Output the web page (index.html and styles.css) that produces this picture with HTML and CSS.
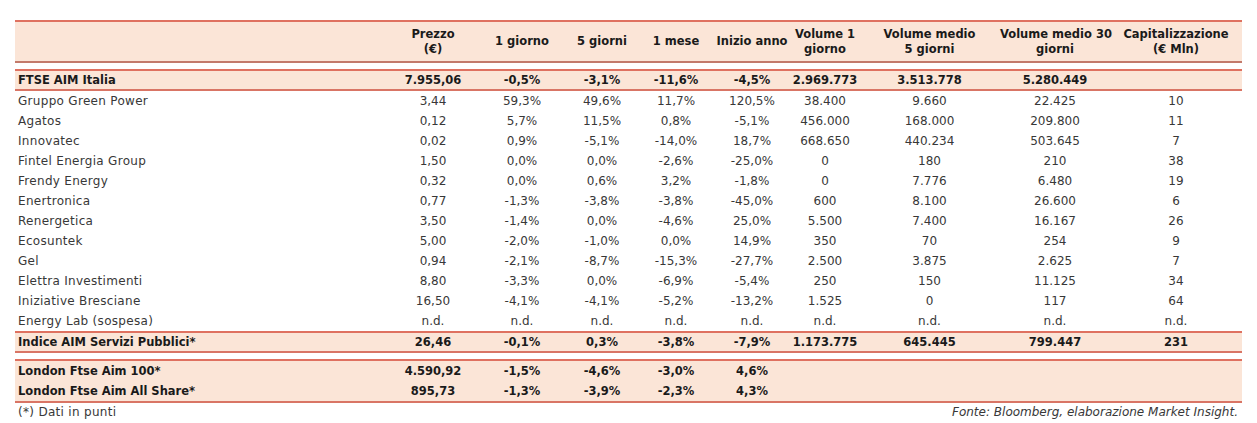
FILE: index.html
```html
<!DOCTYPE html>
<html lang="it">
<head>
<meta charset="utf-8">
<title>AIM Servizi Pubblici</title>
<link rel="stylesheet" href="styles.css">
</head>
<body>
<div class="sheet">
  <div class="band head">
    <div class="row hrow">
      <div class="c name"></div>
      <div class="c">Prezzo<br>(€)</div>
      <div class="c">1 giorno</div>
      <div class="c">5 giorni</div>
      <div class="c">1 mese</div>
      <div class="c">Inizio anno</div>
      <div class="c">Volume 1<br>giorno</div>
      <div class="c">Volume medio<br>5 giorni</div>
      <div class="c">Volume medio 30<br>giorni</div>
      <div class="c">Capitalizzazione<br>(€ Mln)</div>
    </div>
  </div>

  <div class="band idx">
    <div class="row">
      <div class="c name">FTSE AIM Italia</div>
      <div class="c">7.955,06</div><div class="c">-0,5%</div><div class="c">-3,1%</div><div class="c">-11,6%</div><div class="c">-4,5%</div><div class="c">2.969.773</div><div class="c">3.513.778</div><div class="c">5.280.449</div><div class="c"></div>
    </div>
  </div>

  <div class="body">
    <div class="row"><div class="c name">Gruppo Green Power</div><div class="c">3,44</div><div class="c">59,3%</div><div class="c">49,6%</div><div class="c">11,7%</div><div class="c">120,5%</div><div class="c">38.400</div><div class="c">9.660</div><div class="c">22.425</div><div class="c">10</div></div>
    <div class="row"><div class="c name">Agatos</div><div class="c">0,12</div><div class="c">5,7%</div><div class="c">11,5%</div><div class="c">0,8%</div><div class="c">-5,1%</div><div class="c">456.000</div><div class="c">168.000</div><div class="c">209.800</div><div class="c">11</div></div>
    <div class="row"><div class="c name">Innovatec</div><div class="c">0,02</div><div class="c">0,9%</div><div class="c">-5,1%</div><div class="c">-14,0%</div><div class="c">18,7%</div><div class="c">668.650</div><div class="c">440.234</div><div class="c">503.645</div><div class="c">7</div></div>
    <div class="row"><div class="c name">Fintel Energia Group</div><div class="c">1,50</div><div class="c">0,0%</div><div class="c">0,0%</div><div class="c">-2,6%</div><div class="c">-25,0%</div><div class="c">0</div><div class="c">180</div><div class="c">210</div><div class="c">38</div></div>
    <div class="row"><div class="c name">Frendy Energy</div><div class="c">0,32</div><div class="c">0,0%</div><div class="c">0,6%</div><div class="c">3,2%</div><div class="c">-1,8%</div><div class="c">0</div><div class="c">7.776</div><div class="c">6.480</div><div class="c">19</div></div>
    <div class="row"><div class="c name">Enertronica</div><div class="c">0,77</div><div class="c">-1,3%</div><div class="c">-3,8%</div><div class="c">-3,8%</div><div class="c">-45,0%</div><div class="c">600</div><div class="c">8.100</div><div class="c">26.600</div><div class="c">6</div></div>
    <div class="row"><div class="c name">Renergetica</div><div class="c">3,50</div><div class="c">-1,4%</div><div class="c">0,0%</div><div class="c">-4,6%</div><div class="c">25,0%</div><div class="c">5.500</div><div class="c">7.400</div><div class="c">16.167</div><div class="c">26</div></div>
    <div class="row"><div class="c name">Ecosuntek</div><div class="c">5,00</div><div class="c">-2,0%</div><div class="c">-1,0%</div><div class="c">0,0%</div><div class="c">14,9%</div><div class="c">350</div><div class="c">70</div><div class="c">254</div><div class="c">9</div></div>
    <div class="row"><div class="c name">Gel</div><div class="c">0,94</div><div class="c">-2,1%</div><div class="c">-8,7%</div><div class="c">-15,3%</div><div class="c">-27,7%</div><div class="c">2.500</div><div class="c">3.875</div><div class="c">2.625</div><div class="c">7</div></div>
    <div class="row"><div class="c name">Elettra Investimenti</div><div class="c">8,80</div><div class="c">-3,3%</div><div class="c">0,0%</div><div class="c">-6,9%</div><div class="c">-5,4%</div><div class="c">250</div><div class="c">150</div><div class="c">11.125</div><div class="c">34</div></div>
    <div class="row"><div class="c name">Iniziative Bresciane</div><div class="c">16,50</div><div class="c">-4,1%</div><div class="c">-4,1%</div><div class="c">-5,2%</div><div class="c">-13,2%</div><div class="c">1.525</div><div class="c">0</div><div class="c">117</div><div class="c">64</div></div>
    <div class="row"><div class="c name">Energy Lab (sospesa)</div><div class="c">n.d.</div><div class="c">n.d.</div><div class="c">n.d.</div><div class="c">n.d.</div><div class="c">n.d.</div><div class="c">n.d.</div><div class="c">n.d.</div><div class="c">n.d.</div><div class="c">n.d.</div></div>
  </div>

  <div class="band idx">
    <div class="row">
      <div class="c name">Indice AIM Servizi Pubblici*</div>
      <div class="c">26,46</div><div class="c">-0,1%</div><div class="c">0,3%</div><div class="c">-3,8%</div><div class="c">-7,9%</div><div class="c">1.173.775</div><div class="c">645.445</div><div class="c">799.447</div><div class="c">231</div>
    </div>
  </div>

  <div class="band idx london">
    <div class="row">
      <div class="c name">London Ftse Aim 100*</div>
      <div class="c">4.590,92</div><div class="c">-1,5%</div><div class="c">-4,6%</div><div class="c">-3,0%</div><div class="c">4,6%</div><div class="c"></div><div class="c"></div><div class="c"></div><div class="c"></div>
    </div>
    <div class="row">
      <div class="c name">London Ftse Aim All Share*</div>
      <div class="c">895,73</div><div class="c">-1,3%</div><div class="c">-3,9%</div><div class="c">-2,3%</div><div class="c">4,3%</div><div class="c"></div><div class="c"></div><div class="c"></div><div class="c"></div>
    </div>
  </div>

  <div class="foot">
    <span class="note">(*) Dati in punti</span>
    <span class="source">Fonte: Bloomberg, elaborazione Market Insight.</span>
  </div>
</div>
</body>
</html>
```

FILE: styles.css
```css
html, body {
  margin: 0;
  padding: 0;
  background: #ffffff;
}

body {
  font-family: "DejaVu Sans", "Liberation Sans", sans-serif;
  font-size: 12px;
  color: #383838;
}

.sheet {
  width: 1227px;
  padding: 20px 0 0 15px;
}

.row {
  display: grid;
  grid-template-columns: 372px 92px 86px 74px 74px 78px 68px 141px 110px 132px;
  height: 20px;
  align-items: center;
}

.c {
  text-align: center;
  white-space: nowrap;
  line-height: 15px;
}

.c.name {
  text-align: left;
  padding-left: 3px;
}

.body .c.name {
  letter-spacing: 0.3px;
}

.band {
  background: #fbe5d7;
  border-top: 2px solid #df7160;
  border-bottom: 2px solid #d97565;
  font-weight: bold;
  font-size: 11.5px;
  color: #1a1a1a;
}

.head {
  border-bottom-color: #c37a6b;
}

.head .row {
  height: 39px;
}

.head + .idx {
  margin-top: 6px;
}

.idx .row {
  height: 18px;
}

.london {
  margin-top: 6px;
}

.london .row {
  height: 20px;
}

.body .row {
  height: 20px;
}

.foot {
  display: flex;
  justify-content: space-between;
  padding: 1px 4px 0 3px;
  line-height: 17px;
}

.note {
  letter-spacing: 0.3px;
}

.source {
  font-style: italic;
}
```
